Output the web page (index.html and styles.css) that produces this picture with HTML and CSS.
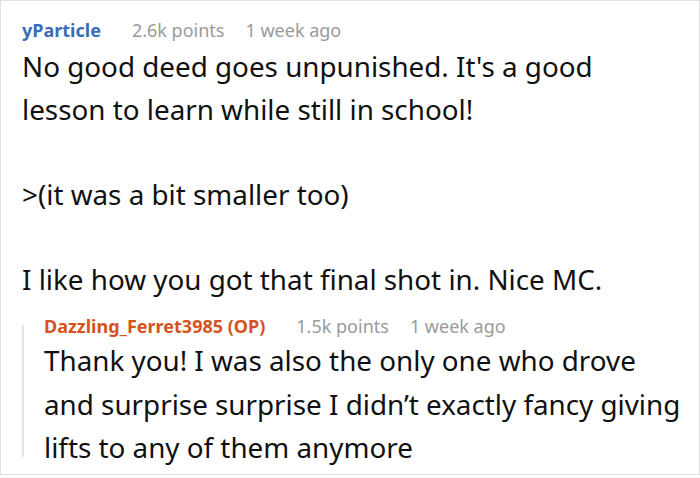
FILE: index.html
```html
<!DOCTYPE html>
<html lang="en">
<head>
<meta charset="utf-8">
<title>Comment</title>
<link rel="stylesheet" href="styles.css">
</head>
<body>
<div class="frame">
  <div class="comment">
    <div class="meta">
      <span class="author author-blue">yParticle</span>
      <span class="points">2.6k points</span>
      <span class="time">1 week ago</span>
    </div>
    <div class="body body-main">
      <p>No good deed goes unpunished. It's a good lesson to learn while still in school!</p>
      <p>&gt;(it was a bit smaller too)</p>
      <p>I like how you got that final shot in. Nice MC.</p>
    </div>
    <div class="reply">
      <div class="meta">
        <span class="author author-orange">Dazzling_Ferret3985 (OP)</span>
        <span class="points">1.5k points</span>
        <span class="time">1 week ago</span>
      </div>
      <div class="body body-reply">
        <p>Thank you! I was also the only one who drove and surprise surprise I didn’t exactly fancy giving lifts to any of them anymore</p>
      </div>
    </div>
  </div>
</div>
</body>
</html>
```
FILE: styles.css
```css
html, body {
  margin: 0;
  padding: 0;
  background: #ffffff;
  height: 478px;
  overflow: hidden;
}
.frame {
  width: 700px;
  height: 475px;
  box-sizing: border-box;
  border: 1px solid #e2e2e2;
  overflow: hidden;
  font-family: "Noto Sans", "Open Sans", sans-serif;
  color: #111111;
}
.comment {
  padding: 16px 12px 0 21px;
}
.meta {
  display: flex;
  align-items: baseline;
  font-size: 18px;
  line-height: 26px;
  color: #9a9a9a;
}
.author {
  font-weight: 700;
}
.author-blue {
  color: #3a6bb8;
}
.author-orange {
  color: #d5531f;
}
.points {
  margin-left: 31px;
}
.time {
  margin-left: 21px;
}
.body {
  font-size: 27.8px;
  line-height: 42.5px;
  margin-top: 2px;
}
.body-main {
  padding-right: 10px;
}
.body p {
  margin: 0 0 42.5px 0;
}
.body p:last-child {
  margin-bottom: 0;
}
.reply {
  position: relative;
  margin-top: 13px;
  padding-left: 22px;
}
.reply::before {
  content: "";
  position: absolute;
  left: 0;
  top: 12px;
  bottom: 13px;
  width: 2px;
  background: #e4e4e4;
}
.body-reply {
  margin-top: 0;
  line-height: 43.5px;
}
```
